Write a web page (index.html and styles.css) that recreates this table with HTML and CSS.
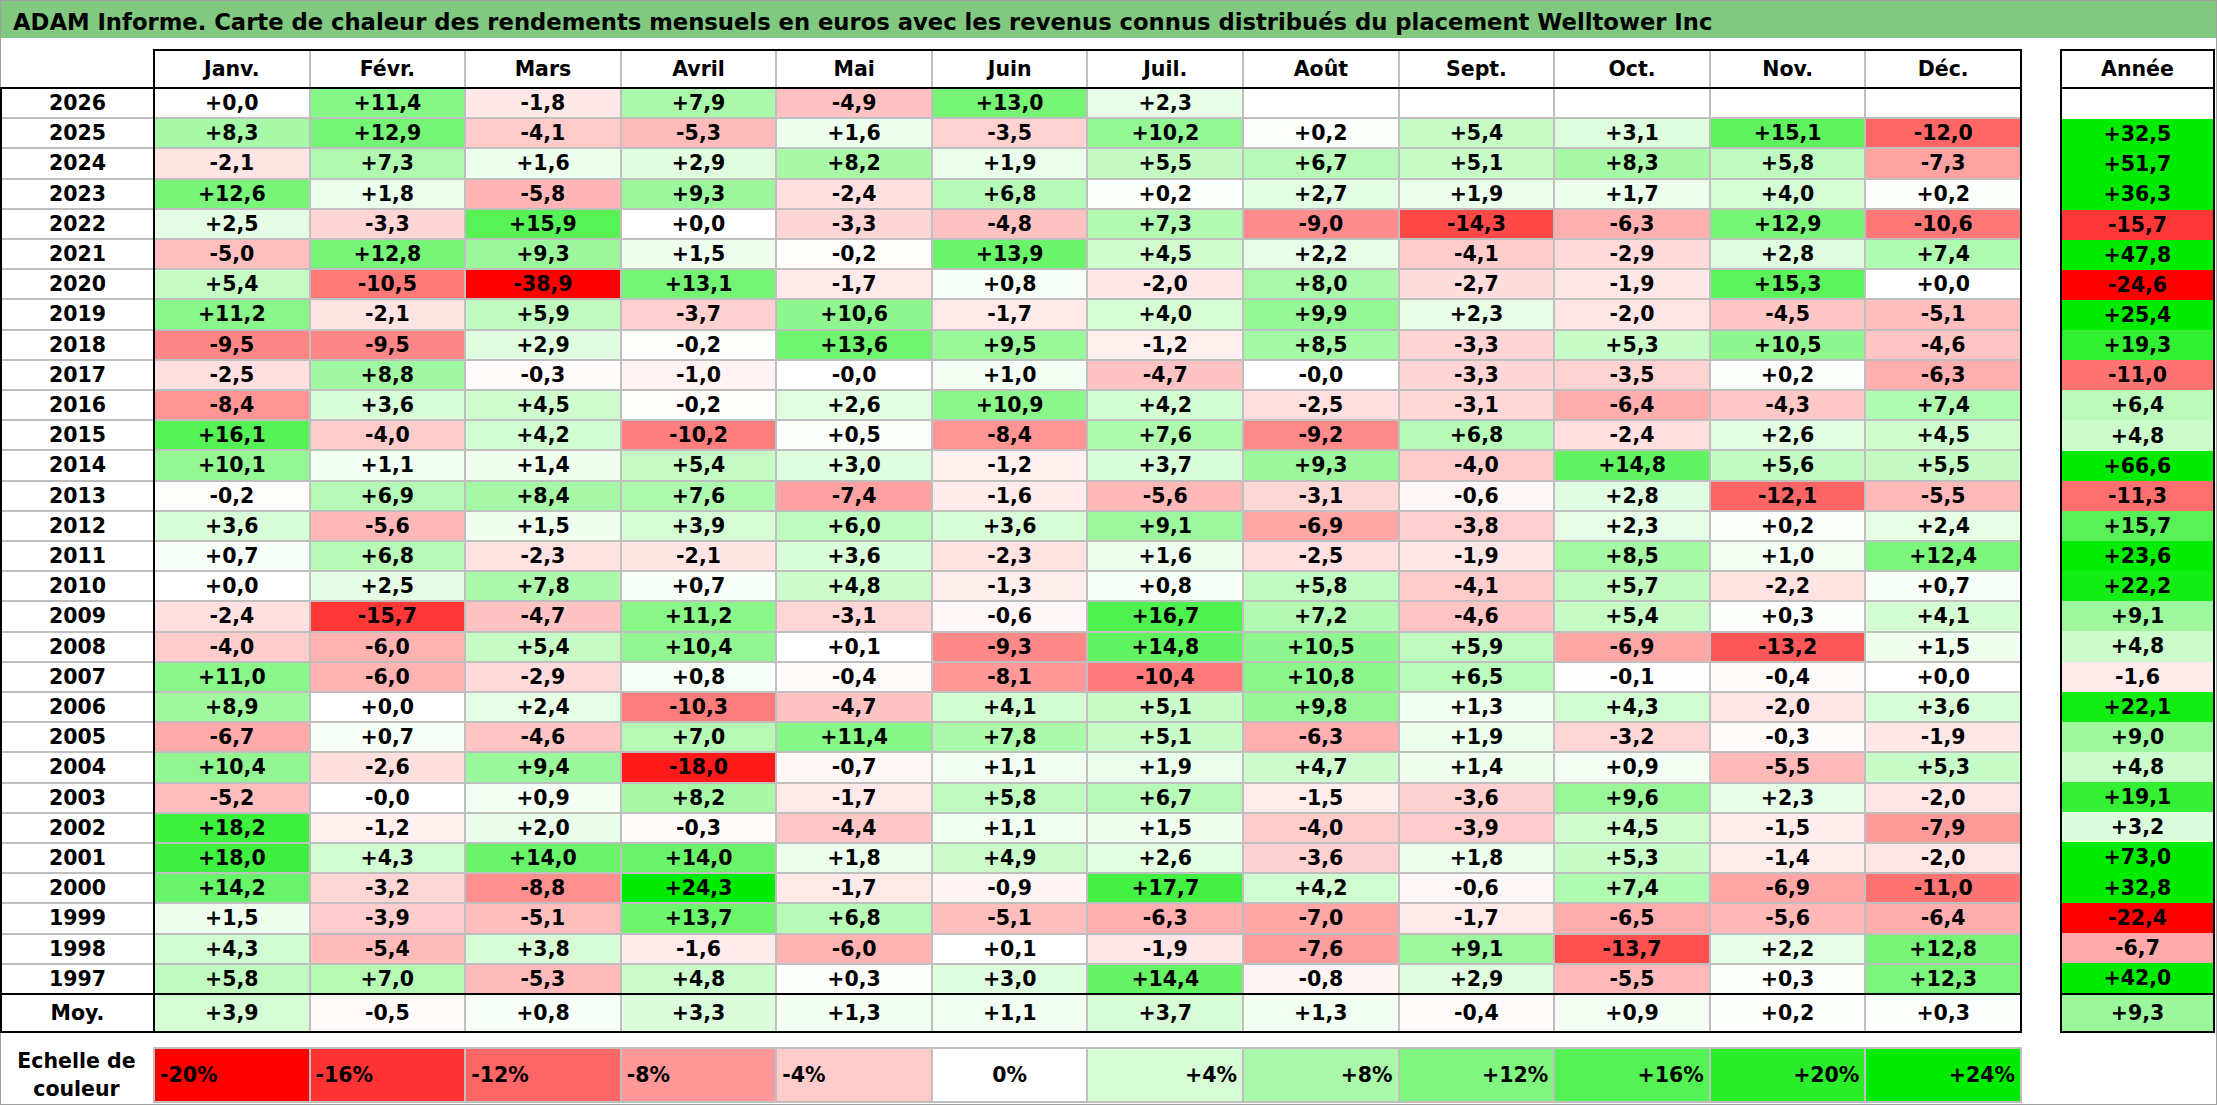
FILE: index.html
```html
<!DOCTYPE html>
<html lang="fr">
<head>
<meta charset="utf-8">
<title>ADAM Informe – Welltower Inc</title>
<link rel="stylesheet" href="styles.css">
</head>
<body>
<div class="frame">
  <div class="title">ADAM Informe. Carte de chaleur des rendements mensuels en euros avec les revenus connus distribués du placement Welltower Inc</div>
  <div class="main">
    <div class="left">
      <div class="hdr-row">
        <div class="corner"></div>
        <div class="hdr">
          <div class="h">Janv.</div><div class="h">Févr.</div><div class="h">Mars</div><div class="h">Avril</div>
          <div class="h">Mai</div><div class="h">Juin</div><div class="h">Juil.</div><div class="h">Août</div>
          <div class="h">Sept.</div><div class="h">Oct.</div><div class="h">Nov.</div><div class="h">Déc.</div>
        </div>
      </div>
      <div class="body">
        <div class="years" id="years"></div>
        <div class="cells" id="cells"></div>
      </div>
      <div class="moy">
        <div class="years one"><div class="c">Moy.</div></div>
        <div class="cells one" id="moycells"></div>
      </div>
    </div>
    <div class="right">
      <div class="ahdr">Année</div>
      <div class="abody" id="annee"></div>
      <div class="amoy" id="amoy"></div>
    </div>
  </div>
  <div class="legend">
    <div class="lab">Echelle de<br>couleur</div>
    <div class="lcells" id="legend"></div>
  </div>
</div>
<script src="script.js"></script>
</body>
</html>
```

FILE: styles.css
```css
body {
  margin: 0;
  background: #fff;
  font-family: "DejaVu Sans", "Liberation Sans", sans-serif;
  font-weight: 700;
  font-size: 20.5px;
  color: #000;
}

.frame {
  width: 2217px;
  height: 1105px;
  box-sizing: border-box;
  box-shadow: inset 0 0 0 1px #a0a0a0;
  overflow: hidden;
}

.title {
  height: 38px;
  box-sizing: border-box;
  background: #81c881;
  border: 1px solid #a0a0a0;
  border-bottom: 0;
  padding: 6px 0 0 12px;
  line-height: 31px;
  font-size: 22.7px;
  white-space: nowrap;
}

.main {
  display: flex;
  gap: 38px;
  margin-top: 11px;
}

.left {
  width: 2022px;
}

.hdr-row {
  display: flex;
  height: 38px;
}

.corner {
  width: 153px;
  flex: none;
}

.hdr {
  flex: 1;
  border: 2px solid #000;
  border-bottom: 0;
  display: grid;
  grid-template-columns: repeat(12, 1fr);
  column-gap: 2px;
  background: #bfbfbf;
}

.h,
.c {
  display: flex;
  align-items: center;
  justify-content: center;
  background: #fff;
  white-space: nowrap;
}

.body {
  display: flex;
  height: 908px;
  box-sizing: border-box;
  border: 2px solid #000;
}

.years {
  width: 151px;
  flex: none;
  border-right: 2px solid #000;
  display: grid;
  grid-template-rows: repeat(30, 1fr);
  row-gap: 2px;
  background: #bfbfbf;
}

.cells {
  flex: 1;
  display: grid;
  grid-template-columns: repeat(12, 1fr);
  grid-template-rows: repeat(30, 1fr);
  gap: 2px;
  background: #bfbfbf;
}

.moy {
  display: flex;
  height: 38px;
  box-sizing: border-box;
  border: 2px solid #000;
  border-top: 0;
}

.years.one,
.cells.one {
  grid-template-rows: 1fr;
}

.right {
  width: 155px;
  flex: none;
}

.ahdr {
  height: 38px;
  box-sizing: border-box;
  border: 2px solid #000;
  border-bottom: 0;
  display: flex;
  align-items: center;
  justify-content: center;
  background: #fff;
}

.abody {
  height: 908px;
  box-sizing: border-box;
  border: 2px solid #000;
  display: grid;
  grid-template-rows: repeat(30, 1fr);
  background: #fff;
}

.amoy {
  height: 38px;
  box-sizing: border-box;
  border: 2px solid #000;
  border-top: 0;
  display: grid;
}

.legend {
  display: flex;
  height: 56px;
  margin-top: 14px;
}

.lab {
  width: 153px;
  flex: none;
  text-align: center;
  line-height: 28px;
}

.lcells {
  width: 1869px;
  box-sizing: border-box;
  border: 2px solid #bfbfbf;
  display: grid;
  grid-template-columns: repeat(12, 1fr);
  column-gap: 2px;
  background: #bfbfbf;
}

.lc {
  display: flex;
  align-items: center;
  padding: 0 5px;
  background: #fff;
}

.lc.neg { justify-content: flex-start; }
.lc.zero { justify-content: center; }
.lc.pos { justify-content: flex-end; }
```

FILE: script.js
```javascript
var rows = [
"2026 +0,0 +11,4 -1,8 +7,9 -4,9 +13,0 +2,3 . . . . . .",
"2025 +8,3 +12,9 -4,1 -5,3 +1,6 -3,5 +10,2 +0,2 +5,4 +3,1 +15,1 -12,0 +32,5",
"2024 -2,1 +7,3 +1,6 +2,9 +8,2 +1,9 +5,5 +6,7 +5,1 +8,3 +5,8 -7,3 +51,7",
"2023 +12,6 +1,8 -5,8 +9,3 -2,4 +6,8 +0,2 +2,7 +1,9 +1,7 +4,0 +0,2 +36,3",
"2022 +2,5 -3,3 +15,9 +0,0 -3,3 -4,8 +7,3 -9,0 -14,3 -6,3 +12,9 -10,6 -15,7",
"2021 -5,0 +12,8 +9,3 +1,5 -0,2 +13,9 +4,5 +2,2 -4,1 -2,9 +2,8 +7,4 +47,8",
"2020 +5,4 -10,5 -38,9 +13,1 -1,7 +0,8 -2,0 +8,0 -2,7 -1,9 +15,3 +0,0 -24,6",
"2019 +11,2 -2,1 +5,9 -3,7 +10,6 -1,7 +4,0 +9,9 +2,3 -2,0 -4,5 -5,1 +25,4",
"2018 -9,5 -9,5 +2,9 -0,2 +13,6 +9,5 -1,2 +8,5 -3,3 +5,3 +10,5 -4,6 +19,3",
"2017 -2,5 +8,8 -0,3 -1,0 -0,0 +1,0 -4,7 -0,0 -3,3 -3,5 +0,2 -6,3 -11,0",
"2016 -8,4 +3,6 +4,5 -0,2 +2,6 +10,9 +4,2 -2,5 -3,1 -6,4 -4,3 +7,4 +6,4",
"2015 +16,1 -4,0 +4,2 -10,2 +0,5 -8,4 +7,6 -9,2 +6,8 -2,4 +2,6 +4,5 +4,8",
"2014 +10,1 +1,1 +1,4 +5,4 +3,0 -1,2 +3,7 +9,3 -4,0 +14,8 +5,6 +5,5 +66,6",
"2013 -0,2 +6,9 +8,4 +7,6 -7,4 -1,6 -5,6 -3,1 -0,6 +2,8 -12,1 -5,5 -11,3",
"2012 +3,6 -5,6 +1,5 +3,9 +6,0 +3,6 +9,1 -6,9 -3,8 +2,3 +0,2 +2,4 +15,7",
"2011 +0,7 +6,8 -2,3 -2,1 +3,6 -2,3 +1,6 -2,5 -1,9 +8,5 +1,0 +12,4 +23,6",
"2010 +0,0 +2,5 +7,8 +0,7 +4,8 -1,3 +0,8 +5,8 -4,1 +5,7 -2,2 +0,7 +22,2",
"2009 -2,4 -15,7 -4,7 +11,2 -3,1 -0,6 +16,7 +7,2 -4,6 +5,4 +0,3 +4,1 +9,1",
"2008 -4,0 -6,0 +5,4 +10,4 +0,1 -9,3 +14,8 +10,5 +5,9 -6,9 -13,2 +1,5 +4,8",
"2007 +11,0 -6,0 -2,9 +0,8 -0,4 -8,1 -10,4 +10,8 +6,5 -0,1 -0,4 +0,0 -1,6",
"2006 +8,9 +0,0 +2,4 -10,3 -4,7 +4,1 +5,1 +9,8 +1,3 +4,3 -2,0 +3,6 +22,1",
"2005 -6,7 +0,7 -4,6 +7,0 +11,4 +7,8 +5,1 -6,3 +1,9 -3,2 -0,3 -1,9 +9,0",
"2004 +10,4 -2,6 +9,4 -18,0 -0,7 +1,1 +1,9 +4,7 +1,4 +0,9 -5,5 +5,3 +4,8",
"2003 -5,2 -0,0 +0,9 +8,2 -1,7 +5,8 +6,7 -1,5 -3,6 +9,6 +2,3 -2,0 +19,1",
"2002 +18,2 -1,2 +2,0 -0,3 -4,4 +1,1 +1,5 -4,0 -3,9 +4,5 -1,5 -7,9 +3,2",
"2001 +18,0 +4,3 +14,0 +14,0 +1,8 +4,9 +2,6 -3,6 +1,8 +5,3 -1,4 -2,0 +73,0",
"2000 +14,2 -3,2 -8,8 +24,3 -1,7 -0,9 +17,7 +4,2 -0,6 +7,4 -6,9 -11,0 +32,8",
"1999 +1,5 -3,9 -5,1 +13,7 +6,8 -5,1 -6,3 -7,0 -1,7 -6,5 -5,6 -6,4 -22,4",
"1998 +4,3 -5,4 +3,8 -1,6 -6,0 +0,1 -1,9 -7,6 +9,1 -13,7 +2,2 +12,8 -6,7",
"1997 +5,8 +7,0 -5,3 +4,8 +0,3 +3,0 +14,4 -0,8 +2,9 -5,5 +0,3 +12,3 +42,0"
];
var moy = "+3,9 -0,5 +0,8 +3,3 +1,3 +1,1 +3,7 +1,3 -0,4 +0,9 +0,2 +0,3 +9,3";

function colour(v) {
  if (v > 0) {
    var f = Math.min(v / 24, 1);
    var r = Math.round(255 * (1 - f));
    var g = Math.round(255 - 20 * f);
    return "rgb(" + r + "," + g + "," + r + ")";
  }
  if (v < 0) {
    var f2 = Math.min(-v / 20, 1);
    var r2 = Math.round(255 * (1 - f2));
    return "rgb(255," + r2 + "," + r2 + ")";
  }
  return "#fff";
}

function cell(text) {
  var d = document.createElement("div");
  d.className = "c";
  if (text !== ".") {
    d.textContent = text;
    d.style.background = colour(parseFloat(text.replace(",", ".")));
  }
  return d;
}

var years = document.getElementById("years");
var cells = document.getElementById("cells");
var annee = document.getElementById("annee");
rows.forEach(function (line) {
  var p = line.split(" ");
  var y = document.createElement("div");
  y.className = "c";
  y.textContent = p[0];
  years.appendChild(y);
  for (var i = 1; i <= 12; i++) cells.appendChild(cell(p[i]));
  annee.appendChild(cell(p[13]));
});

var m = moy.split(" ");
var moycells = document.getElementById("moycells");
for (var i = 0; i < 12; i++) moycells.appendChild(cell(m[i]));
document.getElementById("amoy").appendChild(cell(m[12]));

var legend = document.getElementById("legend");
for (var v = -20; v <= 24; v += 4) {
  var d = document.createElement("div");
  d.className = "lc " + (v < 0 ? "neg" : v === 0 ? "zero" : "pos");
  d.textContent = (v > 0 ? "+" : "") + v + "%";
  d.style.background = colour(v);
  legend.appendChild(d);
}
```
